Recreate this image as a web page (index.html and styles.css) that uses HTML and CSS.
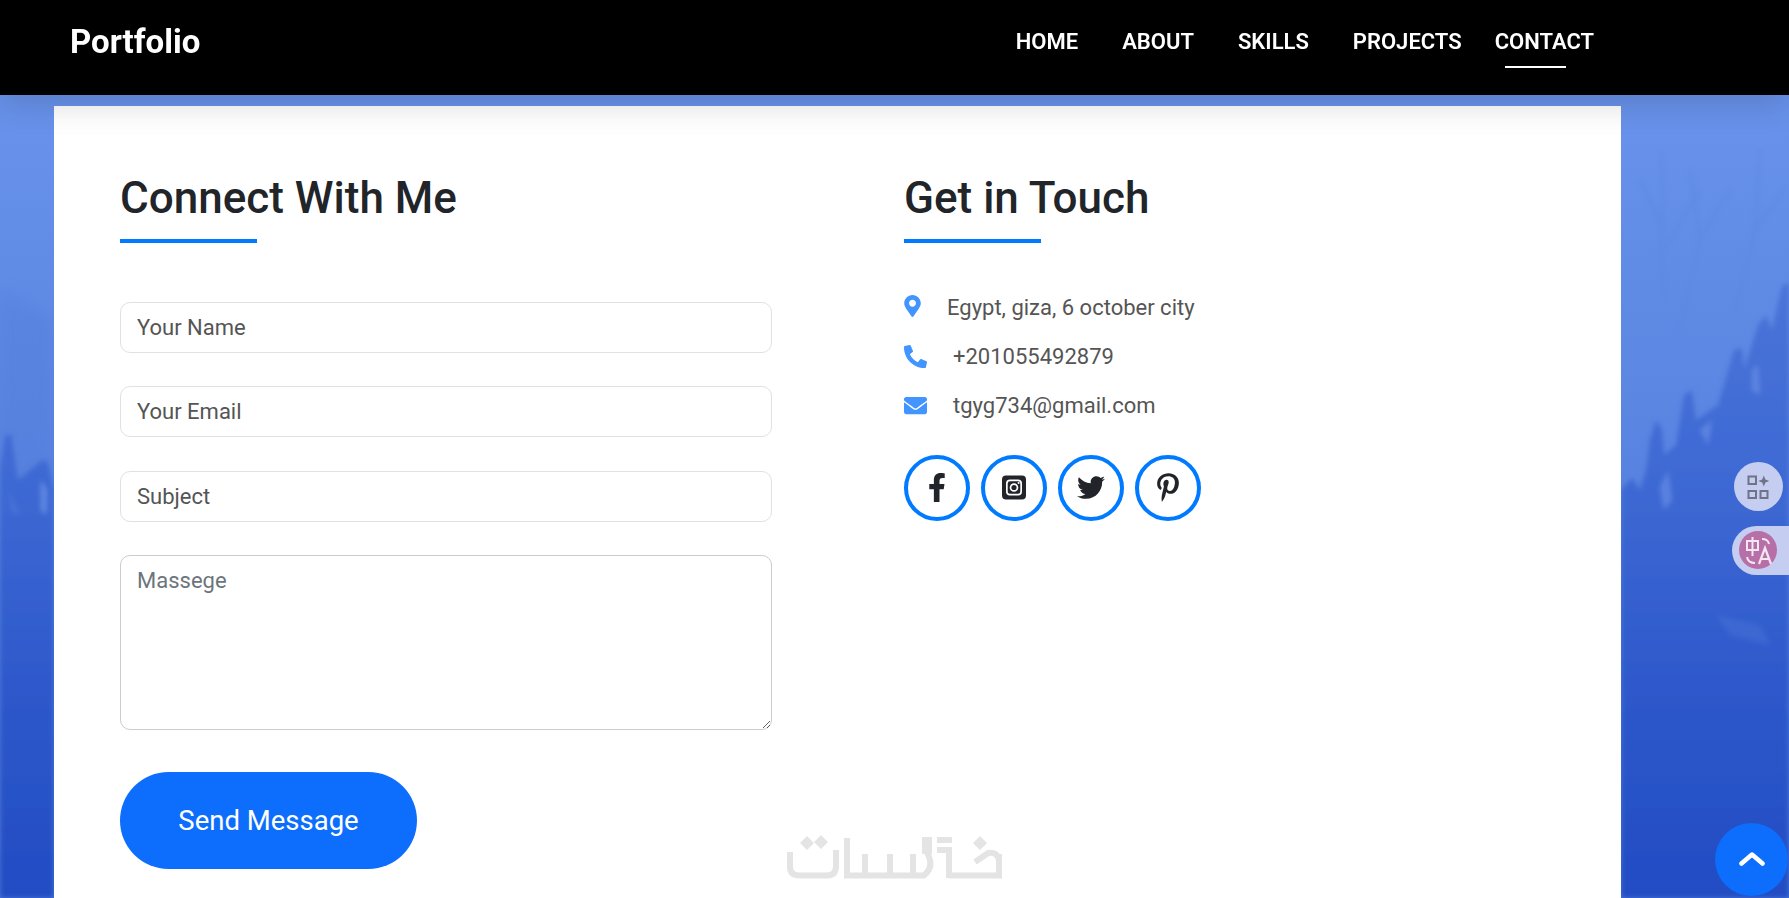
FILE: index.html
```html
<!DOCTYPE html>
<html lang="en">
<head>
    <meta charset="UTF-8">
    <title>Portfolio</title>
    <link rel="stylesheet" href="styles.css">
</head>
<body>
<!-- page background -->
<svg class="bg" viewBox="0 0 1789 898" preserveAspectRatio="none" aria-hidden="true">
    <defs>
        <linearGradient id="sky" x1="0" y1="0" x2="0" y2="1">
            <stop offset="0.1" stop-color="#6993ec"/>
            <stop offset="0.35" stop-color="#5f8ae4"/>
            <stop offset="0.6" stop-color="#5680df"/>
            <stop offset="1" stop-color="#4f79da"/>
        </linearGradient>
        <linearGradient id="ground" gradientUnits="userSpaceOnUse" x1="0" y1="280" x2="0" y2="898">
            <stop offset="0" stop-color="#4a74d8"/>
            <stop offset="0.35" stop-color="#3d68d3"/>
            <stop offset="0.65" stop-color="#2e59cb"/>
            <stop offset="1" stop-color="#224cc3"/>
        </linearGradient>
        <filter id="soft"><feGaussianBlur stdDeviation="2.8"/></filter>
        <filter id="softer"><feGaussianBlur stdDeviation="8"/></filter>
    </defs>
    <rect width="1789" height="898" fill="url(#sky)"/>
    <!-- haze -->
    <path d="M0 290L54 320V520H0Z" fill="#5580dc" opacity=".55" filter="url(#softer)"/>
    <!-- bare trees, right side -->
    <g stroke="#5a84de" stroke-width="3" fill="none" opacity=".4" filter="url(#soft)">
        <path d="M1660 150C1668 200 1656 240 1664 300M1664 230L1640 180M1664 250L1700 190M1690 170L1700 240L1680 330M1700 240L1730 190M1760 150L1755 230L1735 310M1755 230L1785 190"/>
    </g>
    <!-- tree line -->
    <g filter="url(#soft)">
        <path fill="url(#ground)" d="M1621 490L1632 478L1640 490L1646 470L1650 440L1656 420L1662 430L1664 455L1676 445L1684 395L1692 390L1696 420L1718 405L1734 350L1742 348L1744 370L1758 325L1766 315L1772 330L1782 285L1789 283V898H1621Z"/>
        <path fill="url(#ground)" d="M0 470L5 436L11 434L18 480L30 470L42 460L48 462L54 490V898H0Z"/>
        <path fill="#6e95ea" opacity=".6" d="M1660 488L1668 470L1672 500L1664 510ZM1700 430L1712 420L1708 445ZM1752 370L1758 365L1760 395L1752 390Z"/>
        <path fill="#6e95ea" opacity=".75" d="M41 480L47 490L46 515L41 510Z"/>
        <path fill="#4e78da" opacity=".7" d="M8 490L20 515L12 512Z"/>
    </g>
    <path d="M1716 615L1760 625L1770 645L1730 635Z" fill="#4570d6" opacity=".6" filter="url(#soft)"/>
</svg>

<header class="navbar">
    <a href="#" class="brand">Portfolio</a>
    <nav class="links">
        <a href="#">Home</a>
        <a href="#">About</a>
        <a href="#">Skills</a>
        <a href="#">Projects</a>
        <a href="#" class="active">Contact</a>
    </nav>
</header>

<main class="card">
    <section class="col-form">
        <h2 class="title">Connect With Me</h2>
        <form class="form">
            <input type="text" placeholder="Your Name">
            <input type="text" placeholder="Your Email">
            <input type="text" placeholder="Subject">
            <textarea placeholder="Massege"></textarea>
            <button type="button" class="send">Send Message</button>
        </form>
    </section>
    <section class="col-info">
        <h2 class="title">Get in Touch</h2>
        <ul class="info">
            <li>
                <span class="ico"><svg class="pin" viewBox="0 0 384 512"><path d="M172.268 501.67C26.97 291.031 0 260.259 0 192 0 85.961 85.961 0 192 0s192 85.961 192 192c0 68.259-26.97 99.031-172.268 309.67-9.535 13.774-29.93 13.773-39.464 0zM192 272c44.183 0 80-35.817 80-80s-35.817-80-80-80-80 35.817-80 80 35.817 80 80 80z"/></svg></span>
                <span class="txt first">Egypt, giza, 6 october city</span>
            </li>
            <li>
                <span class="ico"><svg class="wide" viewBox="0 0 512 512"><path d="M497.39 361.8l-112-48a24 24 0 0 0-28 6.9l-49.6 60.6A370.66 370.66 0 0 1 130.6 204.11l60.6-49.6a23.94 23.94 0 0 0 6.9-28l-48-112A24.16 24.16 0 0 0 122.6.61l-104 24A24 24 0 0 0 0 48c0 256.5 207.9 464 464 464a24 24 0 0 0 23.4-18.6l24-104a24.29 24.29 0 0 0-14.01-27.6z"/></svg></span>
                <span class="txt">+201055492879</span>
            </li>
            <li>
                <span class="ico"><svg class="wide" viewBox="0 0 512 512"><path d="M502.3 190.8c3.9-3.1 9.7-.2 9.7 4.7V400c0 26.5-21.5 48-48 48H48c-26.5 0-48-21.5-48-48V195.6c0-5 5.7-7.8 9.7-4.7 22.4 17.4 52.1 39.5 154.1 113.6 21.1 15.4 56.7 47.8 92.2 47.6 35.7.3 72-32.8 92.3-47.6 102-74.1 131.6-96.3 154-113.7zM256 320c23.2.4 56.6-29.2 73.4-41.4 132.7-96.3 142.8-104.7 173.4-128.7 5.8-4.5 9.2-11.5 9.2-18.9v-19c0-26.5-21.5-48-48-48H48C21.5 64 0 85.5 0 112v19c0 7.4 3.4 14.3 9.2 18.9 30.6 23.9 40.7 32.4 173.4 128.7 16.8 12.2 50.2 41.8 73.4 41.4z"/></svg></span>
                <span class="txt">tgyg734@gmail.com</span>
            </li>
        </ul>
        <div class="social">
            <a href="#"><svg class="fb" viewBox="0 0 320 512"><path d="M279.14 288l14.22-92.66h-88.91v-60.13c0-25.35 12.42-50.06 52.24-50.06h40.42V6.26S260.43 0 225.36 0c-73.22 0-121.08 44.38-121.08 124.72v70.62H22.89V288h81.39v224h100.17V288z"/></svg></a>
            <a href="#"><svg class="ig" viewBox="0 0 24 24"><path fill-rule="evenodd" d="M4 0H20A4 4 0 0 1 24 4V20A4 4 0 0 1 20 24H4A4 4 0 0 1 0 20V4A4 4 0 0 1 4 0ZM8 4A4 4 0 0 0 4 8V16A4 4 0 0 0 8 20H16A4 4 0 0 0 20 16V8A4 4 0 0 0 16 4ZM8 5.7H16A2.3 2.3 0 0 1 18.3 8V16A2.3 2.3 0 0 1 16 18.3H8A2.3 2.3 0 0 1 5.7 16V8A2.3 2.3 0 0 1 8 5.7ZM12 7.7A4.3 4.3 0 1 0 12 16.3A4.3 4.3 0 1 0 12 7.7ZM12 9.4A2.6 2.6 0 1 1 12 14.6A2.6 2.6 0 1 1 12 9.4ZM16.6 6.4A1 1 0 1 0 16.6 8.4A1 1 0 1 0 16.6 6.4Z"/></svg></a>
            <a href="#"><svg class="tw" viewBox="0 48 512 416"><path d="M459.37 151.716c.325 4.548.325 9.097.325 13.645 0 138.72-105.583 298.558-298.558 298.558-59.452 0-114.68-17.219-161.137-47.106 8.447.974 16.568 1.299 25.34 1.299 49.055 0 94.213-16.568 130.274-44.832-46.132-.975-84.792-31.188-98.112-72.772 6.498.974 12.995 1.624 19.818 1.624 9.421 0 18.843-1.3 27.614-3.573-48.081-9.747-84.143-51.98-84.143-102.985v-1.299c13.969 7.797 30.214 12.67 47.431 13.319-28.264-18.843-46.781-51.005-46.781-87.391 0-19.492 5.197-37.36 14.294-52.954 51.655 63.675 129.3 105.258 216.365 109.807-1.624-7.797-2.599-15.918-2.599-24.04 0-57.828 46.782-104.934 104.934-104.934 30.213 0 57.502 12.67 76.67 33.137 23.715-4.548 46.456-13.32 66.599-25.34-7.798 24.366-24.366 44.833-46.132 57.827 21.117-2.273 41.584-8.122 60.426-16.243-14.292 20.791-32.161 39.308-52.628 54.253z"/></svg></a>
            <a href="#"><svg class="pt" viewBox="0 0 384 512"><path d="M204 6.5C101.4 6.5 0 74.9 0 185.6 0 256 39.6 296 63.6 296c9.9 0 15.6-27.6 15.6-35.4 0-9.3-23.7-29.1-23.7-67.8 0-80.4 61.2-137.4 140.4-137.4 68.1 0 118.5 38.7 118.5 109.8 0 53.1-21.3 152.7-90.3 152.7-24.9 0-46.2-18-46.2-43.8 0-37.8 26.4-74.4 26.4-113.4 0-66.2-93.9-54.2-93.9 25.8 0 16.8 2.1 35.4 9.6 50.7-13.8 59.4-42 147.9-42 209.1 0 18.9 2.7 37.5 4.5 56.4 3.4 3.8 1.7 3.4 6.9 1.5 50.4-69 48.6-82.5 71.4-172.8 12.3 23.4 44.1 36 69.3 36 106.2 0 153.9-103.5 153.9-196.8C384 71.3 298.2 6.5 204 6.5z"/></svg></a>
        </div>
    </section>
</main>

<!-- watermark logo -->
<svg class="mark" viewBox="0 0 230 60" aria-hidden="true">
    <g fill="none" stroke="#e4e4e4" stroke-width="6">
        <path d="M10 22V37Q10 45.5 20 45.5H47Q56 45.5 56 36V20"/>
        <path d="M67 8V45.5H144Q155 36 147 23"/>
        <path d="M85 24V45M110 24V45M133 24V45"/>
        <path d="M169 20V48M169 45.5H219V24"/>
        <path d="M195 32L208 23Q217 21 219 30"/>
    </g>
    <g fill="#e4e4e4">
        <path d="M142 7h10v17h-10zM157 7h15v6h-15zM157 17h15v6h-15z"/>
        <path d="M27 6l7 7-7 7-7-7zM41 5l7 7-7 7-7-7zM200 6l7 7-7 7-7-7z"/>
    </g>
</svg>

<!-- browser extension buttons -->
<div class="tool-btn">
    <svg viewBox="0 0 24 24"><g fill="none" stroke="#6f7388" stroke-width="2"><rect x="1.5" y="1.5" width="7.5" height="7.5"/><rect x="1.5" y="16" width="7.5" height="7"/><rect x="13.5" y="16" width="7" height="7"/></g><path fill="#6f7388" d="M16.8 .5L18.4 4.4L22.3 6L18.4 7.6L16.8 11.5L15.2 7.6L11.3 6L15.2 4.4Z"/></svg>
</div>
<div class="translate-btn">
    <span class="translate-icon">
        <svg viewBox="0 0 38 38"><g fill="none" stroke="#f4e6f0" stroke-width="2"><path d="M8 10H19V19H8ZM13.5 6V25M23 8Q29 8 30 13M8 26Q9 32 16 32"/></g><path fill="none" stroke="#f4e6f0" stroke-width="2.2" d="M20 33L26 17L32 33M22 28H30"/></svg>
    </span>
</div>

<a href="#" class="to-top">
    <svg viewBox="0 0 26 14"><path d="M2.5 11.5L13 2.5L23.5 11.5" fill="none" stroke="#fff" stroke-width="4.5" stroke-linecap="round" stroke-linejoin="round"/></svg>
</a>
</body>
</html>
```
FILE: styles.css
```css
* {
    margin: 0;
    padding: 0;
    box-sizing: border-box;
}

html, body {
    height: 100%;
    overflow: hidden;
}

body {
    font-family: Roboto, "Liberation Sans", sans-serif;
    background-color: #4f79da;
    color: #212529;
}

a {
    text-decoration: none;
    color: inherit;
}

ul {
    list-style: none;
}

/* background picture stays behind everything */
.bg {
    position: fixed;
    left: 0;
    top: 0;
    width: 100%;
    height: 100%;
    z-index: -1;
}

/* top bar */
.navbar {
    position: relative;
    z-index: 2;
    height: 95px;
    padding: 0 195px 0 70px;
    display: flex;
    align-items: center;
    justify-content: space-between;
    background-color: #000;
    color: #fff;
    box-shadow: 0 10px 30px rgba(0, 0, 0, 0.15);
}

.brand {
    font-size: 33px;
    font-weight: 700;
    margin-top: -13px;
}

.links {
    display: flex;
    gap: 44px;
    margin-top: -13px;
}

.links a {
    position: relative;
    font-size: 22px;
    font-weight: 600;
    text-transform: uppercase;
}

.links a.active {
    margin-left: -11px;
}

.links a.active::after {
    content: "";
    position: absolute;
    left: 10px;
    bottom: -14px;
    width: 61px;
    height: 2px;
    background-color: #fff;
}

/* main white box */
.card {
    margin: 11px 0 0 54px;
    width: 1567px;
    height: 792px;
    padding: 66px 0 0 66px;
    display: flex;
    gap: 132px;
    background-color: #fff;
}

.col-form {
    width: 652px;
}

.title {
    position: relative;
    font-size: 44px;
    font-weight: 500;
    line-height: 52px;
    padding-bottom: 19px;
}

.title::after {
    content: "";
    position: absolute;
    left: 0;
    bottom: 0;
    width: 137px;
    height: 4px;
    background-color: #007bff;
}

.form {
    display: flex;
    flex-direction: column;
    align-items: flex-start;
    margin-top: 59px;
}

.form input,
.form textarea {
    width: 100%;
    font-family: inherit;
    font-size: 22px;
    color: #212529;
    padding: 0 16px;
    border: 1px solid #dee2e6;
    border-radius: 10px;
    background-color: #fff;
    outline: none;
}

.form input {
    height: 51px;
    margin-bottom: 33.3px;
}

.form input::placeholder {
    color: #555;
    opacity: 1;
}

.form textarea {
    height: 175px;
    padding-top: 8px;
    line-height: 33px;
    border-color: #ccc;
}

.form textarea::placeholder {
    color: #6c757d;
    opacity: 1;
}

.send {
    width: 297px;
    height: 97px;
    margin-top: 42px;
    font-family: inherit;
    font-size: 27.5px;
    color: #fff;
    background-color: #0d6efd;
    border: 0;
    border-radius: 50px;
}

/* contact list */
.info {
    margin-top: 39.5px;
}

.info li {
    height: 49px;
    display: flex;
    align-items: center;
    font-size: 22px;
    color: #555;
}

.ico {
    width: 49px;
    display: flex;
}

.ico svg {
    fill: #4294ff;
}

.pin {
    width: 17px;
    height: 22px;
    margin-top: -2px;
}

.wide {
    width: 23px;
    height: 23px;
}

.txt.first {
    margin-left: -6px;
}

.social {
    display: flex;
    gap: 11px;
    margin-top: 25.5px;
}

.social a {
    width: 66px;
    height: 66px;
    display: flex;
    align-items: center;
    justify-content: center;
    border: 4px solid #007bff;
    border-radius: 50%;
}

.social svg {
    fill: #212529;
}

.fb { width: 18px; height: 29px; margin-top: -2px; }
.ig { width: 24px; height: 25px; margin-top: -2px; }
.tw { width: 28px; height: 23px; margin-top: -2px; }
.pt { width: 22px; height: 29px; margin-top: -2px; }

/* floating stuff */
.mark {
    position: fixed;
    left: 780px;
    top: 830px;
    width: 230px;
    height: 60px;
}

.tool-btn {
    position: fixed;
    left: 1734px;
    top: 462px;
    width: 49px;
    height: 49px;
    border-radius: 50%;
    background-color: #c5cdf0;
    display: flex;
    align-items: center;
    justify-content: center;
}

.tool-btn svg {
    width: 24px;
    height: 24px;
}

.translate-btn {
    position: fixed;
    left: 1732px;
    top: 526px;
    width: 57px;
    height: 49px;
    border-radius: 25px 0 0 25px;
    background-color: #c5cdf0;
    padding: 5px 0 0 7px;
}

.translate-icon {
    display: block;
    width: 38px;
    height: 38px;
    border-radius: 50%;
    background-color: #b76fa8;
}

.to-top {
    position: fixed;
    left: 1715px;
    top: 823px;
    width: 73px;
    height: 73px;
    border-radius: 50%;
    background-color: #0d6efd;
    display: flex;
    align-items: center;
    justify-content: center;
}

.to-top svg {
    width: 26px;
    height: 14px;
    margin-top: -1px;
}
```
